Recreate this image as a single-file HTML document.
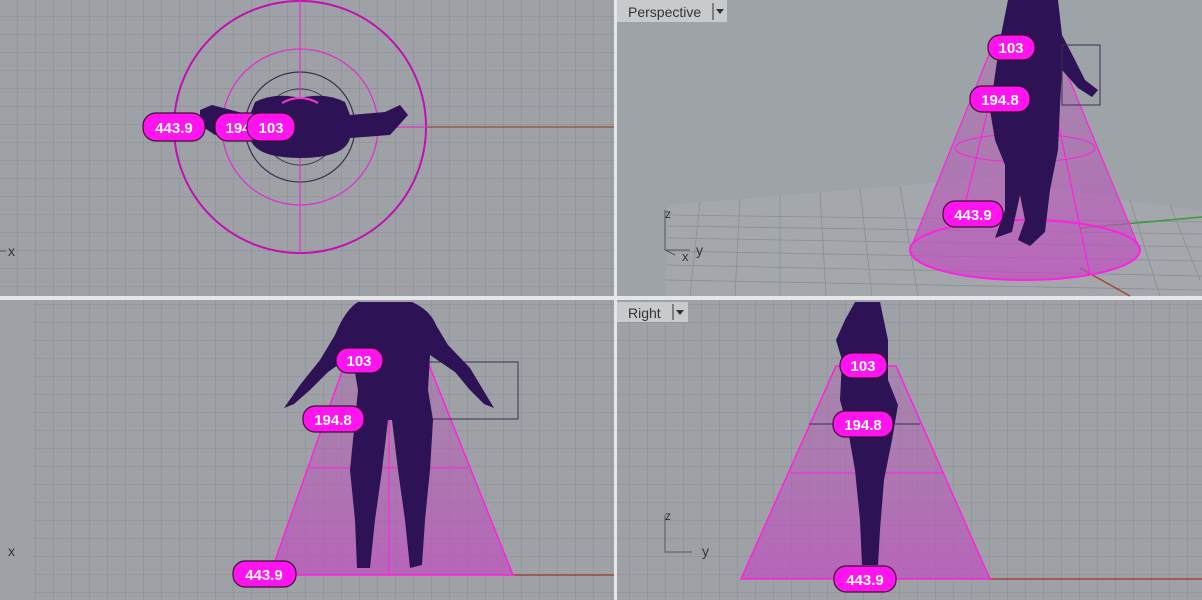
<!DOCTYPE html>
<html><head><meta charset="utf-8"><style>
html,body{margin:0;padding:0;background:#9ea2a7;}
svg{display:block}
text{font-family:"Liberation Sans",sans-serif;}
.p{fill:#ff14f0;stroke:#3a1030;stroke-width:1.2}
.pt{fill:#fff;font-weight:bold;font-size:15px;text-anchor:middle}
</style></head><body>
<svg width="1202" height="600" viewBox="0 0 1202 600" xmlns="http://www.w3.org/2000/svg">
<defs>
<pattern id="g" x="17" y="16" width="18" height="18" patternUnits="userSpaceOnUse">
<path d="M0 0H18M0 0V18" stroke="#8a8e93" stroke-width="1" fill="none"/>
</pattern>
<linearGradient id="cone" x1="0" y1="0" x2="0" y2="1">
<stop offset="0" stop-color="#b060b0" stop-opacity="0.4"/>
<stop offset="1" stop-color="#c050c0" stop-opacity="0.75"/>
</linearGradient>
</defs>
<rect width="1202" height="600" fill="#9ea2a7"/>
<!-- TL -->
<rect x="0" y="0" width="614" height="296" fill="url(#g)"/>
<line x1="427" y1="127" x2="614" y2="127" stroke="#a0453a" stroke-width="1.3"/>
<circle cx="300" cy="127" r="126" fill="none" stroke="#c010b0" stroke-width="2"/>
<circle cx="300" cy="127" r="78" fill="none" stroke="#e030d0" stroke-width="1.3"/>
<circle cx="300" cy="127" r="55" fill="none" stroke="#3a3050" stroke-width="1.2"/>
<circle cx="300" cy="127" r="38" fill="none" stroke="#3a3050" stroke-width="1"/>
<line x1="300" y1="0" x2="300" y2="253" stroke="#e030d0" stroke-width="1.2"/>
<line x1="173" y1="127" x2="427" y2="127" stroke="#e030d0" stroke-width="1.2"/>
<path d="M200 110 L212 105 L250 115 L255 102 Q275 92 300 98 Q325 92 345 102 L350 115 L385 112 L400 105 L408 115 L400 124 L390 135 L350 138 Q345 158 300 158 Q255 158 250 138 L215 135 L200 125Z" fill="#2d1255"/>
<path d="M282 103 Q300 93 318 103" stroke="#ff30e0" stroke-width="2" fill="none"/>
<text x="8" y="256" font-size="14" fill="#333">x</text><line x1="0" y1="251" x2="6" y2="251" stroke="#555"/>
<rect class="p" x="143" y="113" width="62" height="28" rx="13"/><text class="pt" x="174" y="133">443.9</text>
<rect class="p" x="215" y="113" width="48" height="28" rx="13"/><text class="pt" x="238" y="133">194</text>
<rect class="p" x="247" y="113" width="48" height="28" rx="13"/><text class="pt" x="271" y="133">103</text>
<!-- dividers -->
<rect x="614" y="0" width="3" height="600" fill="#e4e6e8"/>
<rect x="0" y="296" width="1202" height="4" fill="#e4e6e8"/>
<!-- TR -->
<rect x="617" y="0" width="585" height="296" fill="#9ea3a8"/>
<polygon points="668,205 990,178 1202,212 1202,296 665,296" fill="#a4a8ac"/>
<g stroke="#8a8e92" stroke-width="0.8">
<line x1="668" y1="215" x2="1202" y2="222"/><line x1="668" y1="226" x2="1202" y2="234"/>
<line x1="667" y1="238" x2="1202" y2="247"/><line x1="667" y1="251" x2="1202" y2="261"/>
<line x1="666" y1="265" x2="1202" y2="276"/><line x1="666" y1="280" x2="1202" y2="290"/>
<line x1="700" y1="202" x2="690" y2="296"/><line x1="740" y1="199" x2="735" y2="296"/>
<line x1="780" y1="195" x2="780" y2="296"/><line x1="820" y1="192" x2="826" y2="296"/>
<line x1="860" y1="189" x2="872" y2="296"/><line x1="900" y1="186" x2="918" y2="296"/>
<line x1="1130" y1="200" x2="1160" y2="296"/><line x1="1170" y1="205" x2="1200" y2="280"/>
</g>
<line x1="1080" y1="228" x2="1202" y2="217" stroke="#3a9a3a" stroke-width="1.5"/>
<line x1="1080" y1="268" x2="1130" y2="296" stroke="#a0453a" stroke-width="1.5"/>
<path d="M990 52 L1058 52 L1140 250 A115 30 0 0 1 910 250Z" fill="url(#cone)"/>
<ellipse cx="1025" cy="250" rx="115" ry="30" fill="none" stroke="#ff20e0" stroke-width="2"/>
<ellipse cx="1025" cy="148" rx="70" ry="14" fill="none" stroke="#ff20e0" stroke-width="1"/>
<path d="M990 52 L910 250 M1058 52 L1140 250 M1045 60 L1090 275 M1000 60 L960 225" stroke="#ff20e0" stroke-width="1.2" fill="none"/>
<path d="M1008 0 L1058 0 L1062 35 L1075 60 L1085 80 L1098 90 L1092 97 L1078 88 L1062 70 L1060 105 L1058 150 L1050 190 L1045 232 L1030 246 L1018 240 L1025 220 L1020 195 L1012 232 L995 238 L1005 210 L1005 165 L995 140 L990 110 L995 75 L1000 40Z" fill="#2d1255"/>
<rect x="1062" y="45" width="38" height="60" fill="none" stroke="#3a3050"/>
<rect x="617" y="0" width="110" height="22" fill="#c8cbce"/>
<text x="628" y="17" font-size="14" fill="#333">Perspective</text>
<line x1="713" y1="3" x2="713" y2="20" stroke="#333"/>
<path d="M716 9 L724 9 L720 14Z" fill="#333"/>
<path d="M665 210 V250 L675 255 M665 250 L690 250" stroke="#555" fill="none"/>
<text x="665" y="218" font-size="12" fill="#333">z</text><text x="682" y="261" font-size="13" fill="#333">x</text><text x="696" y="255" font-size="14" fill="#333">y</text>
<rect class="p" x="988" y="35" width="47" height="25" rx="12"/><text class="pt" x="1011" y="53">103</text>
<rect class="p" x="970" y="86" width="60" height="26" rx="12"/><text class="pt" x="1000" y="105">194.8</text>
<rect class="p" x="943" y="201" width="60" height="26" rx="12"/><text class="pt" x="973" y="220">443.9</text>
<!-- BL -->
<rect x="34" y="300" width="580" height="300" fill="url(#g)"/>
<line x1="513" y1="575" x2="614" y2="575" stroke="#a0453a" stroke-width="1.5"/>
<path d="M346 360 L427 360 L513 575 L270 575Z" fill="url(#cone)" stroke="#ff20e0" stroke-width="1.5"/>
<line x1="310" y1="468" x2="468" y2="468" stroke="#ff20e0"/>
<line x1="389" y1="360" x2="389" y2="575" stroke="#ff20e0"/>
<rect x="421" y="362" width="97" height="57" fill="none" stroke="#3a3050"/>
<path d="M358 302 L412 302 Q430 310 436 325 L448 345 L470 368 L494 408 L484 404 L470 390 L455 372 L430 355 L428 390 L433 420 L430 470 L425 520 L422 565 L410 568 L405 520 L398 470 L392 420 L388 420 L382 470 L375 520 L370 568 L357 568 L355 520 L350 470 L355 420 L358 390 L352 355 L328 372 L310 390 L294 404 L284 408 L300 385 L320 360 L335 335 Q345 310 358 302Z" fill="#2d1255"/>
<text x="8" y="556" font-size="14" fill="#333">x</text>
<rect class="p" x="336" y="348" width="47" height="25" rx="12"/><text class="pt" x="359" y="366">103</text>
<rect class="p" x="303" y="406" width="61" height="26" rx="12"/><text class="pt" x="333" y="425">194.8</text>
<rect class="p" x="233" y="561" width="63" height="26" rx="12"/><text class="pt" x="264" y="580">443.9</text>
<!-- BR -->
<rect x="617" y="300" width="585" height="300" fill="url(#g)"/>
<line x1="990" y1="579" x2="1202" y2="579" stroke="#a0453a" stroke-width="1.5"/>
<path d="M836 366 L896 366 L990 579 L741 579Z" fill="url(#cone)" stroke="#ff20e0" stroke-width="1.5"/>
<line x1="790" y1="473" x2="942" y2="473" stroke="#ff20e0"/>
<line x1="809" y1="424" x2="920" y2="424" stroke="#3a3050"/>
<line x1="865" y1="437" x2="865" y2="566" stroke="#ff20e0" stroke-width="2"/>
<path d="M855 302 L880 302 L888 340 L888 380 L898 405 L892 440 L884 480 L880 530 L878 565 L862 565 L860 520 L855 470 L848 430 L840 400 L842 360 L836 340 L845 320Z" fill="#2d1255"/>
<rect x="617" y="302" width="71" height="20" fill="#c8cbce"/>
<text x="628" y="318" font-size="14" fill="#333">Right</text>
<line x1="673" y1="304" x2="673" y2="320" stroke="#333"/>
<path d="M676 310 L684 310 L680 315Z" fill="#333"/>
<path d="M665 515 V552 H692" stroke="#555" fill="none"/>
<text x="665" y="520" font-size="12" fill="#333">z</text><text x="702" y="556" font-size="14" fill="#333">y</text>
<rect class="p" x="840" y="353" width="47" height="25" rx="12"/><text class="pt" x="863" y="371">103</text>
<rect class="p" x="833" y="411" width="60" height="26" rx="12"/><text class="pt" x="863" y="430">194.8</text>
<rect class="p" x="834" y="566" width="62" height="26" rx="12"/><text class="pt" x="865" y="585">443.9</text>
</svg>
</body></html>
